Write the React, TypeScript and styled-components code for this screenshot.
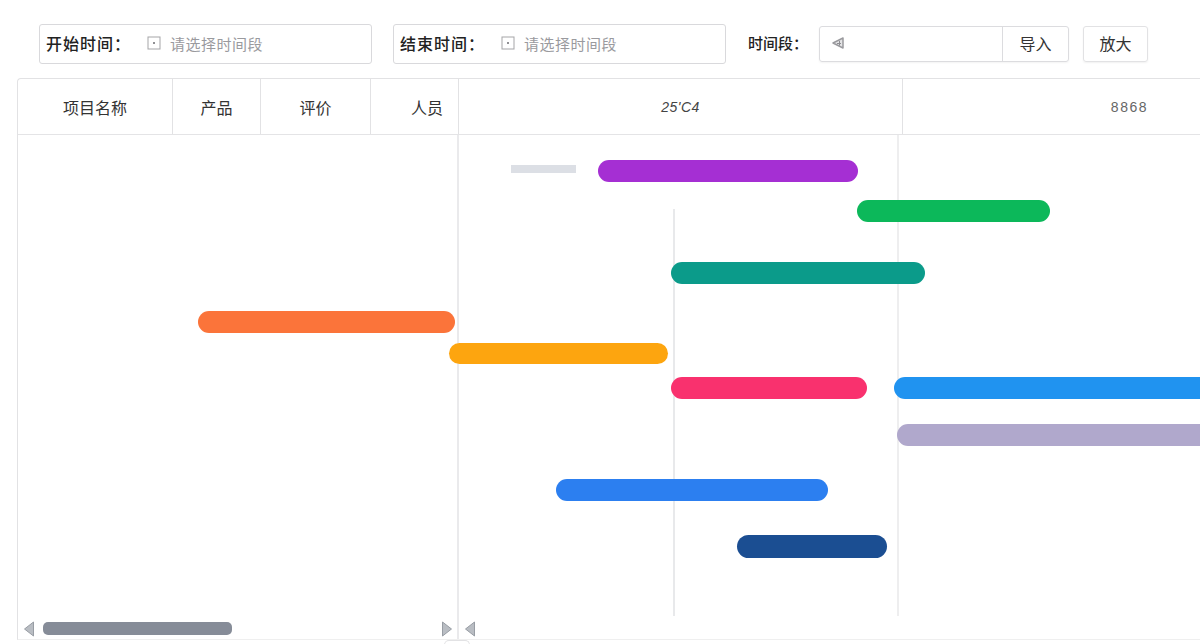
import React from "react";
import styled, { createGlobalStyle } from "styled-components";

const Global = createGlobalStyle`
  html, body { margin: 0; padding: 0; background: #fff; }
  body { width: 1200px; height: 644px; overflow: hidden; font-family: "Noto Sans CJK SC", "Liberation Sans", sans-serif; color: #222; }
  * { box-sizing: border-box; }
`;

const Page = styled.div`
  width: 1200px;
  height: 644px;
  overflow: hidden;
  padding: 24px 0 4px 17px;
  display: flex;
  flex-direction: column;
  gap: 14px;
`;

const Toolbar = styled.div`
  display: flex;
  align-items: flex-start;
  padding-left: 22px;
  height: 40px;
`;

const Field = styled.div`
  width: 333px;
  height: 40px;
  border: 1px solid #d9d9dc;
  border-radius: 3px;
  display: flex;
  align-items: center;
  padding: 0 0 2px 6px;
  margin-right: 21px;
`;

const FieldLabel = styled.span`
  width: 101px;
  font-size: 16px;
  font-weight: 500;
  letter-spacing: 1px;
  color: #222;
  white-space: nowrap;
`;

const Placeholder = styled.span`
  margin-left: 9px;
  font-size: 15px;
  letter-spacing: 0.5px;
  color: #9a9a9e;
  white-space: nowrap;
`;

const RangeLabel = styled.span`
  font-size: 15px;
  font-weight: 500;
  line-height: 38px;
  color: #222;
  margin: 0 11px 0 1px;
  white-space: nowrap;
`;

const Combo = styled.div`
  width: 250px;
  height: 36px;
  margin-top: 2px;
  border: 1px solid #dcdcdf;
  border-radius: 3px;
  display: flex;
  box-shadow: 0 1px 2px rgba(0, 0, 0, 0.05);
`;

const ComboInput = styled.div`
  flex: 1;
  display: flex;
  align-items: center;
  padding: 0 0 2px 11px;
  border-right: 1px solid #dcdcdf;
`;

const ComboAction = styled.div`
  width: 65px;
  display: flex;
  align-items: center;
  justify-content: center;
  padding-bottom: 3px;
  font-size: 16px;
  color: #333;
`;

const Button = styled.div`
  width: 65px;
  height: 36px;
  margin: 2px 0 0 14px;
  border: 1px solid #e2e2e4;
  border-radius: 3px;
  display: flex;
  align-items: center;
  justify-content: center;
  padding-bottom: 3px;
  font-size: 16px;
  color: #333;
  box-shadow: 0 1px 2px rgba(0, 0, 0, 0.06);
`;

const Table = styled.div`
  flex: 1;
  border: 1px solid #e2e2e4;
  border-right: none;
  border-bottom-color: #efefef;
  border-top-left-radius: 4px;
  display: flex;
  flex-direction: column;
  min-height: 0;
`;

const HeaderRow = styled.div`
  display: flex;
  height: 56px;
  flex: none;
  border-bottom: 1px solid #e4e4e6;
`;

const HeaderCell = styled.div<{ $w: number; $end?: boolean }>`
  width: ${(p) => p.$w}px;
  flex: none;
  display: flex;
  align-items: center;
  justify-content: ${(p) => (p.$end ? "flex-end" : "center")};
  padding-right: ${(p) => (p.$end ? "15px" : "0")};
  border-right: 1px solid #e2e2e4;
  font-size: 16px;
  color: #333;
  white-space: nowrap;
`;

const TimeCell = styled(HeaderCell)`
  font-family: "Liberation Sans", sans-serif;
  font-style: italic;
  font-size: 14px;
  color: #444;
  letter-spacing: 0.5px;
`;

const LastCell = styled.div`
  flex: 1;
  display: flex;
  align-items: center;
  justify-content: flex-end;
  padding-right: 52px;
  font-family: "Liberation Sans", sans-serif;
  font-size: 14px;
  letter-spacing: 1.5px;
  color: #666;
`;

const Body = styled.div`
  position: relative;
  flex: 1;
  min-height: 0;
`;

const GridLine = styled.div<{ $x: number; $top: number; $bottom: number; $c: string }>`
  position: absolute;
  left: ${(p) => p.$x}px;
  top: ${(p) => p.$top}px;
  bottom: ${(p) => p.$bottom}px;
  width: 2px;
  background: ${(p) => p.$c};
`;

const Bar = styled.div<{ $x: number; $y: number; $w: number; $h: number; $c: string; $square?: boolean }>`
  position: absolute;
  left: ${(p) => p.$x}px;
  top: ${(p) => p.$y}px;
  width: ${(p) => p.$w}px;
  height: ${(p) => p.$h}px;
  background: ${(p) => p.$c};
  border-radius: ${(p) => (p.$square ? "0" : `${p.$h / 2}px`)};
`;

const Thumb = styled.div`
  position: absolute;
  left: 25px;
  top: 487px;
  width: 189px;
  height: 13px;
  border-radius: 5px;
  background: #868c98;
`;

const Arrow = styled.svg<{ $x: number }>`
  position: absolute;
  left: ${(p) => p.$x}px;
  top: 486px;
`;

const TrackTab = styled.div`
  position: absolute;
  left: 426px;
  bottom: -6px;
  width: 26px;
  height: 5px;
  border: 1px solid #e2e2e4;
  border-bottom: none;
  border-radius: 5px 5px 0 0;
  background: #fff;
`;

const Tri = ({ x, right }: { x: number; right?: boolean }) => (
  <Arrow $x={x} width="12" height="16" viewBox="0 0 12 16">
    <path
      d={right ? "M1.5 1 L10.5 8 L1.5 15 Z" : "M10.5 1 L1.5 8 L10.5 15 Z"}
      fill="#b9bdc3"
      stroke="#989da4"
      strokeWidth="1"
    />
  </Arrow>
);

const FieldIcon = () => (
  <svg width="14" height="14" viewBox="0 0 14 14">
    <rect x="1" y="1" width="12" height="12" fill="none" stroke="#a5a5a8" strokeWidth="1" />
    <rect x="6" y="6" width="2" height="2" fill="#909094" />
  </svg>
);

const ClockIcon = () => (
  <svg width="14" height="14" viewBox="0 0 14 14">
    <path d="M12 2 L2 7 L12 12 Z" fill="#e4e4e6" stroke="#9a9a9e" strokeWidth="1.5" strokeLinejoin="round" />
    <path d="M8.5 5 V9.5 M6 7.5 H10" stroke="#8d8d91" strokeWidth="1" />
  </svg>
);

const bars = [
  { x: 493, y: 30, w: 65, h: 8, c: "#dcdfe5", square: true },
  { x: 580, y: 25, w: 260, h: 22, c: "#a52fd3" },
  { x: 839, y: 65, w: 193, h: 22, c: "#0cb85a" },
  { x: 653, y: 127, w: 254, h: 22, c: "#0b9b8a" },
  { x: 180, y: 176, w: 257, h: 22, c: "#fb743a" },
  { x: 431, y: 208, w: 219, h: 21, c: "#fda50f" },
  { x: 653, y: 242, w: 196, h: 22, c: "#f9316e" },
  { x: 876, y: 242, w: 340, h: 22, c: "#2093f0" },
  { x: 879, y: 289, w: 340, h: 22, c: "#b0a8cc" },
  { x: 538, y: 344, w: 272, h: 22, c: "#2c7ff0" },
  { x: 719, y: 400, w: 150, h: 23, c: "#1b4e92" },
];

export default function App() {
  return (
    <Page>
      <Global />
      <Toolbar>
        <Field>
          <FieldLabel>开始时间：</FieldLabel>
          <FieldIcon />
          <Placeholder>请选择时间段</Placeholder>
        </Field>
        <Field>
          <FieldLabel>结束时间：</FieldLabel>
          <FieldIcon />
          <Placeholder>请选择时间段</Placeholder>
        </Field>
        <RangeLabel>时间段：</RangeLabel>
        <Combo>
          <ComboInput>
            <ClockIcon />
          </ComboInput>
          <ComboAction>导入</ComboAction>
        </Combo>
        <Button>放大</Button>
      </Toolbar>
      <Table>
        <HeaderRow>
          <HeaderCell $w={155}>项目名称</HeaderCell>
          <HeaderCell $w={88}>产品</HeaderCell>
          <HeaderCell $w={110}>评价</HeaderCell>
          <HeaderCell $w={88} $end>人员</HeaderCell>
          <TimeCell $w={444}>25'C4</TimeCell>
          <LastCell>8868</LastCell>
        </HeaderRow>
        <Body>
          <GridLine $x={439} $top={0} $bottom={0} $c="#eaeaec" />
          <GridLine $x={655} $top={74} $bottom={23} $c="#e8e9eb" />
          <GridLine $x={879} $top={0} $bottom={23} $c="#eeeeef" />
          {bars.map((b) => (
            <Bar key={`${b.x}-${b.y}`} $x={b.x} $y={b.y} $w={b.w} $h={b.h} $c={b.c} $square={b.square} />
          ))}
          <Tri x={5} />
          <Thumb />
          <Tri x={423} right />
          <Tri x={446} />
          <TrackTab />
        </Body>
      </Table>
    </Page>
  );
}
